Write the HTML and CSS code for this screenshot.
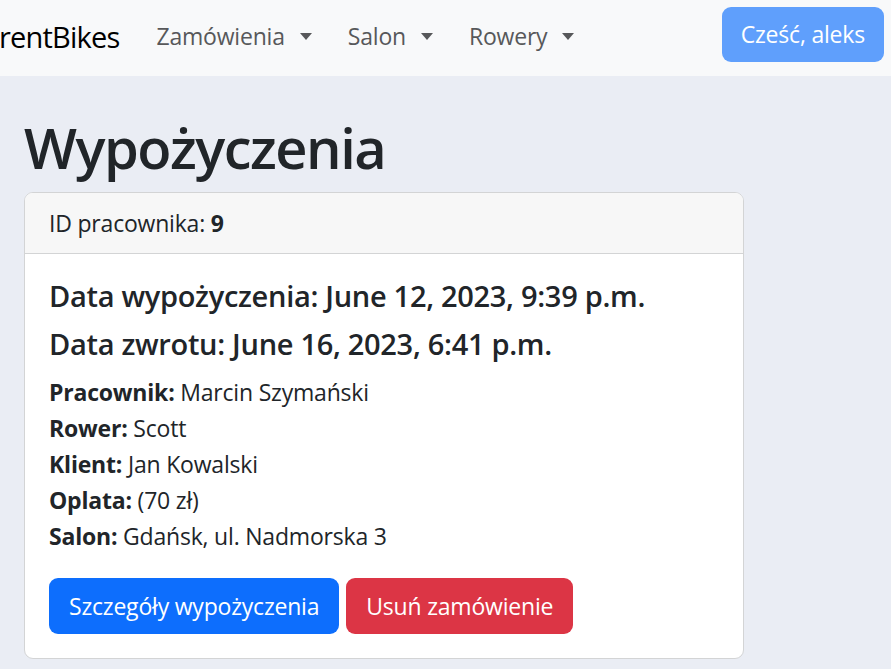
FILE: index.html
```html
<!DOCTYPE html>
<html lang="pl">
<head>
<meta charset="utf-8">
<title>Wypożyczenia</title>
<link rel="stylesheet" href="styles.css">
</head>
<body>
<nav class="navbar">
  <a class="brand" href="#">rentBikes</a>
  <ul class="nav">
    <li><a class="nav-link toggle" href="#">Zamówienia</a></li>
    <li><a class="nav-link toggle" href="#">Salon</a></li>
    <li><a class="nav-link toggle" href="#">Rowery</a></li>
  </ul>
  <a class="btn btn-hello" href="#">Cześć, aleks</a>
</nav>
<main class="container">
  <h1 class="title">Wypożyczenia</h1>
  <section class="card">
    <div class="card-header">ID pracownika: <b>9</b></div>
    <div class="card-body">
      <h5 class="card-title">Data wypożyczenia: June 12, 2023, 9:39 p.m.</h5>
      <h5 class="card-title">Data zwrotu: June 16, 2023, 6:41 p.m.</h5>
      <p class="details">
        <b>Pracownik:</b> Marcin Szymański<br>
        <b>Rower:</b> Scott<br>
        <b>Klient:</b> Jan Kowalski<br>
        <b>Oplata:</b> (70 zł)<br>
        <b>Salon:</b> Gdańsk, ul. Nadmorska 3
      </p>
      <div class="actions">
        <a class="btn btn-primary" href="#">Szczegóły wypożyczenia</a>
        <a class="btn btn-danger" href="#">Usuń zamówienie</a>
      </div>
    </div>
  </section>
</main>
</body>
</html>
```
FILE: styles.css
```css
* { box-sizing: border-box; }
html, body { margin: 0; padding: 0; }
body {
  font-family: "Open Sans", "Noto Sans", sans-serif;
  font-size: 23px;
  letter-spacing: -0.2px;
  line-height: 1.5;
  color: #212529;
  background: #eaedf4;
}
a { text-decoration: none; }
.navbar {
  height: 76px;
  background: #f8f9fa;
  display: flex;
  align-items: flex-start;
  padding: 7px 7px 0 0;
}
.brand {
  font-size: 29px;
  letter-spacing: -0.8px;
  line-height: 55px;
  padding-top: 2px;
  color: #000;
  margin-left: -1px;
  margin-right: 19px;
}
.nav {
  list-style: none;
  margin: 0;
  padding: 0;
  display: flex;
  flex: 1;
}
.nav-link {
  display: inline-flex;
  align-items: center;
  height: 55px;
  padding: 3px 18px 0;
  color: #57585a;
}
.toggle::after {
  content: "";
  margin-left: 15px;
  border-top: 7px solid #57585a;
  border-left: 6px solid transparent;
  border-right: 6px solid transparent;
}
.btn {
  display: inline-block;
  padding: 9px 19px;
  border: 1px solid transparent;
  border-radius: 9px;
  color: #fff;
  line-height: 36px;
}
.btn-hello {
  background: #5f9ffc;
  height: 55px;
  padding: 0 18px;
  line-height: 53px;
}
.container {
  padding: 32px 0 0 24px;
  width: 744px;
}
.title {
  margin: 0 0 12px;
  font-size: 56px;
  letter-spacing: -1.5px;
  line-height: 72px;
  font-weight: 600;
  position: relative;
  top: 3px;
}
.card {
  background: #fff;
  border: 1px solid #d3d4d5;
  border-radius: 9px;
  overflow: hidden;
}
.card-header {
  background: #f7f7f7;
  border-bottom: 1px solid #d3d4d5;
  padding: 12px 24px;
  line-height: 36px;
}
.card-body {
  padding: 24px;
}
.card-title {
  margin: 0 0 12px;
  font-size: 29px;
  letter-spacing: -0.3px;
  line-height: 36px;
  font-weight: 600;
}
.details {
  margin: 0 0 24px;
  line-height: 36px;
}
.actions {
  display: flex;
  gap: 7px;
}
.btn-primary { background: #0d6efd; }
.btn-danger { background: #dc3545; }
```
